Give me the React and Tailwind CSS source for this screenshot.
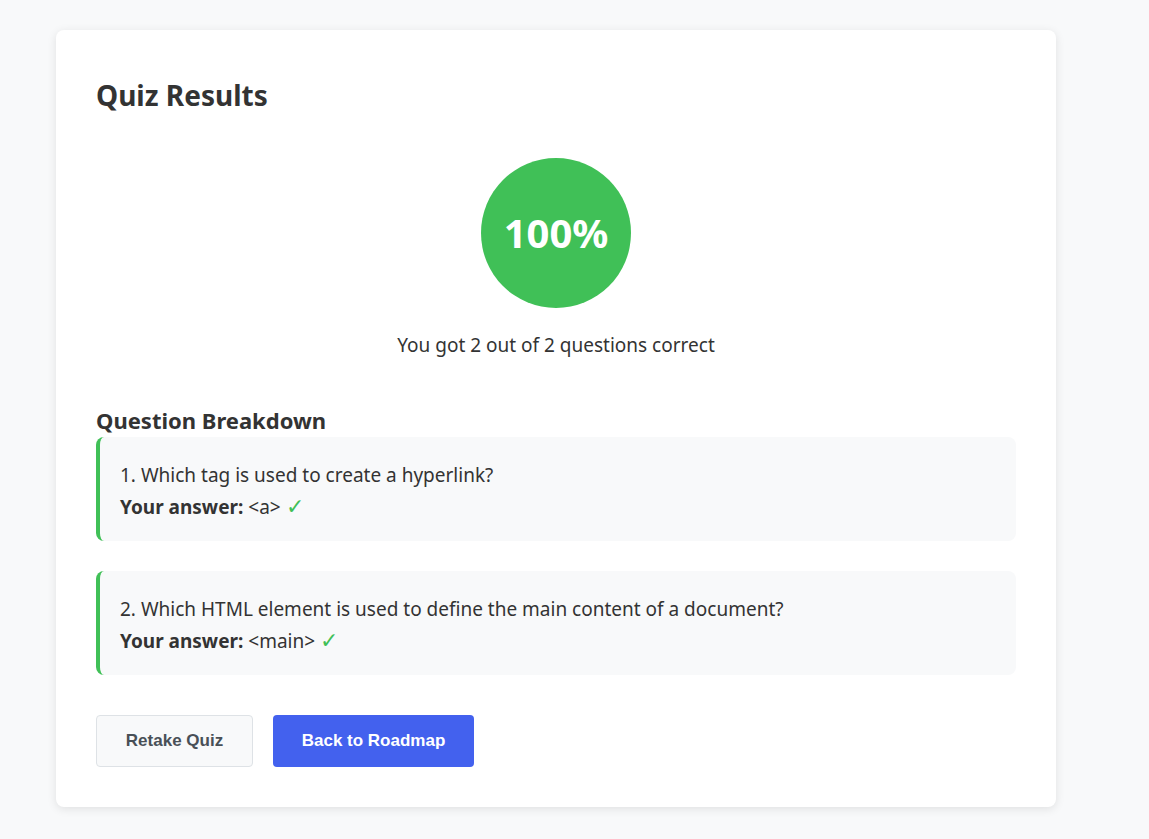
import React from "react";

const questions = [
  { q: "1. Which tag is used to create a hyperlink?", a: "<a>" },
  { q: "2. Which HTML element is used to define the main content of a document?", a: "<main>" },
];

export default function App() {
  return (
    <div className="min-h-screen bg-[#f8f9fa] px-14 pt-[30px] pb-8 text-[#333] font-['Segoe_UI','Noto_Sans',sans-serif]">
      <div className="w-[1000px] rounded-lg bg-white p-10 shadow-[0_2px_10px_rgba(0,0,0,0.1)]">
        <h1 className="mt-[5px] text-[28px] font-bold leading-[40px]">Quiz Results</h1>

        <div className="mt-[43px] flex flex-col items-center">
          <div className="flex h-[150px] w-[150px] items-center justify-center rounded-full bg-[#40c057] text-[40px] font-bold text-white">
            100%
          </div>
          <p className="mt-[23px] text-[19px] leading-7">You got 2 out of 2 questions correct</p>
        </div>

        <h3 className="mt-[47px] text-[22px] font-bold leading-7">Question Breakdown</h3>
        <div className="mt-[3px] flex flex-col gap-[30px]">
          {questions.map(item => (
            <div
              key={item.q}
              className="rounded-lg border-l-4 border-[#40c057] bg-[#f8f9fa] px-5 pt-[22px] pb-[18px] text-[19px]"
            >
              <p className="leading-8">{item.q}</p>
              <p className="h-8 leading-8">
                <strong>Your answer:</strong> {item.a}{" "}
                <span className="text-[22px] leading-none text-[#40c057]">✓</span>
              </p>
            </div>
          ))}
        </div>

        <div className="mt-10 flex gap-5 font-['Liberation_Sans',Arial,sans-serif] text-[17px] font-bold">
          <button className="h-[52px] w-[157px] rounded border border-[#dee2e6] bg-[#f8f9fa] text-[#495057]">
            Retake Quiz
          </button>
          <button className="h-[52px] w-[201px] rounded bg-[#4361ee] text-white">
            Back to Roadmap
          </button>
        </div>
      </div>
    </div>
  );
}
